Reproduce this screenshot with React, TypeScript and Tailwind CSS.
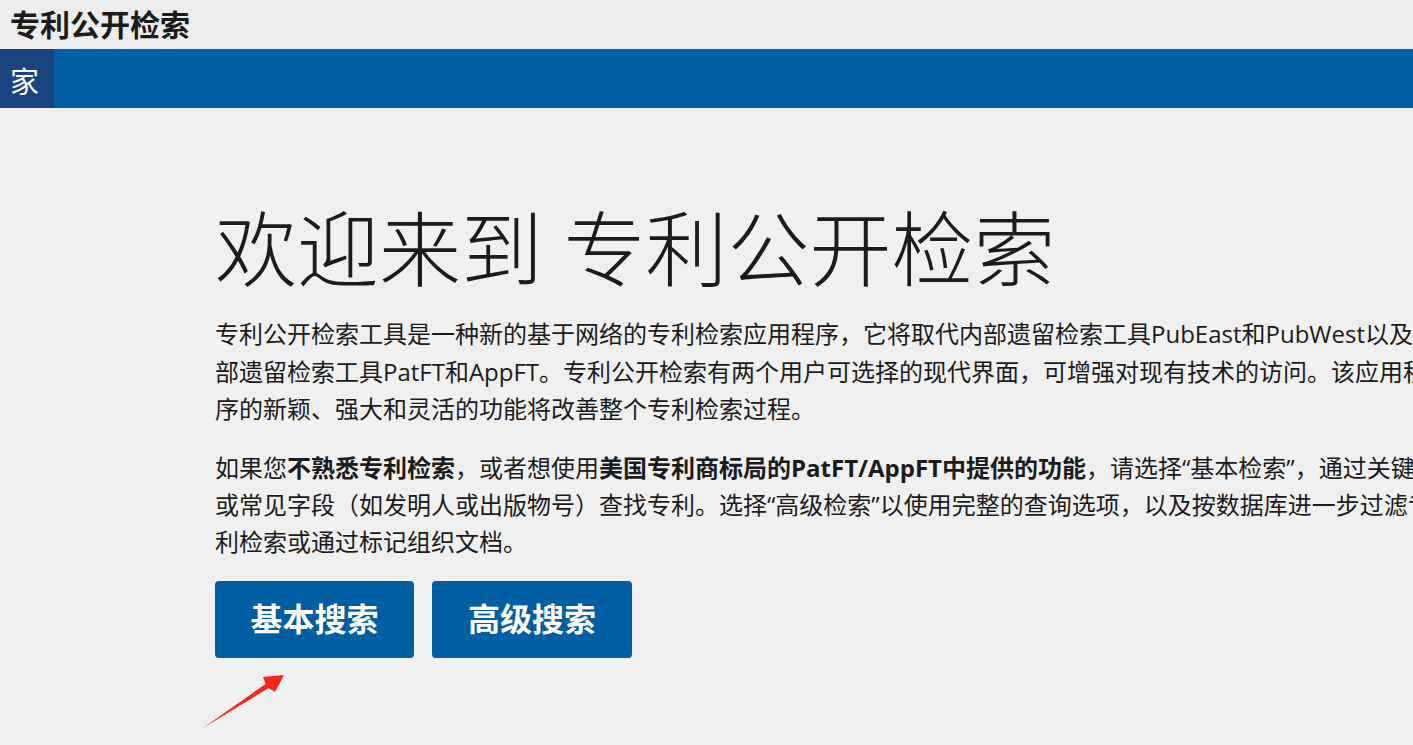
import React from "react";

export default function App() {
  const sans = { fontFamily: '"Open Sans", "Noto Sans CJK SC", sans-serif' };
  return (
    <div className="relative w-[1413px] h-[745px] overflow-hidden bg-[#f0f0f0] text-[#1b1b1b]" style={sans}>
      <header className="h-[49px] bg-[#ececec] flex items-center pl-[10px]">
        <h1 className="text-[30px] font-bold leading-none">专利公开检索</h1>
      </header>
      <nav className="h-[59px] bg-[#005ea2] flex">
        <div className="w-[54px] bg-[#1a4480] text-white text-[29px] flex items-center pl-[10px] pt-[6px]">家</div>
      </nav>
      <main className="pl-[215px] pt-[97px]">
        <h2
          className="text-[82px] font-light leading-[96px] whitespace-nowrap"
          style={{ fontFamily: '"Liberation Serif", "Noto Sans CJK SC", serif' }}
        >
          欢迎来到 专利公开检索
        </h2>
        <p className="mt-[14px] text-[24px] leading-[37.5px] whitespace-nowrap">
          专利公开检索工具是一种新的基于网络的专利检索应用程序，它将取代内部遗留检索工具PubEast和PubWest以及外
          <br />
          部遗留检索工具PatFT和AppFT。专利公开检索有两个用户可选择的现代界面，可增强对现有技术的访问。该应用程
          <br />
          序的新颖、强大和灵活的功能将改善整个专利检索过程。
        </p>
        <p className="mt-[21px] text-[24px] leading-[37px] whitespace-nowrap">
          如果您<b className="font-bold">不熟悉专利检索</b>，或者想使用
          <b className="font-bold">美国专利商标局的PatFT/AppFT中提供的功能</b>，请选择“基本检索”，通过关键字
          <br />
          或常见字段（如发明人或出版物号）查找专利。选择“高级检索”以使用完整的查询选项，以及按数据库进一步过滤专
          <br />
          利检索或通过标记组织文档。
        </p>
        <div className="mt-[21px] flex gap-[18px]">
          <button className="w-[199px] h-[77px] rounded-[4px] bg-[#005ea2] text-white text-[32px] font-bold">
            基本搜索
          </button>
          <button className="w-[200px] h-[77px] rounded-[4px] bg-[#005ea2] text-white text-[32px] font-bold">
            高级搜索
          </button>
        </div>
      </main>
      <svg className="absolute left-0 top-0 pointer-events-none" width="1413" height="745">
        <polygon
          points="203,728 265.6,683.9 263,677 284,675 275,692 268.4,688.1"
          fill="#f5271b"
        />
      </svg>
    </div>
  );
}
